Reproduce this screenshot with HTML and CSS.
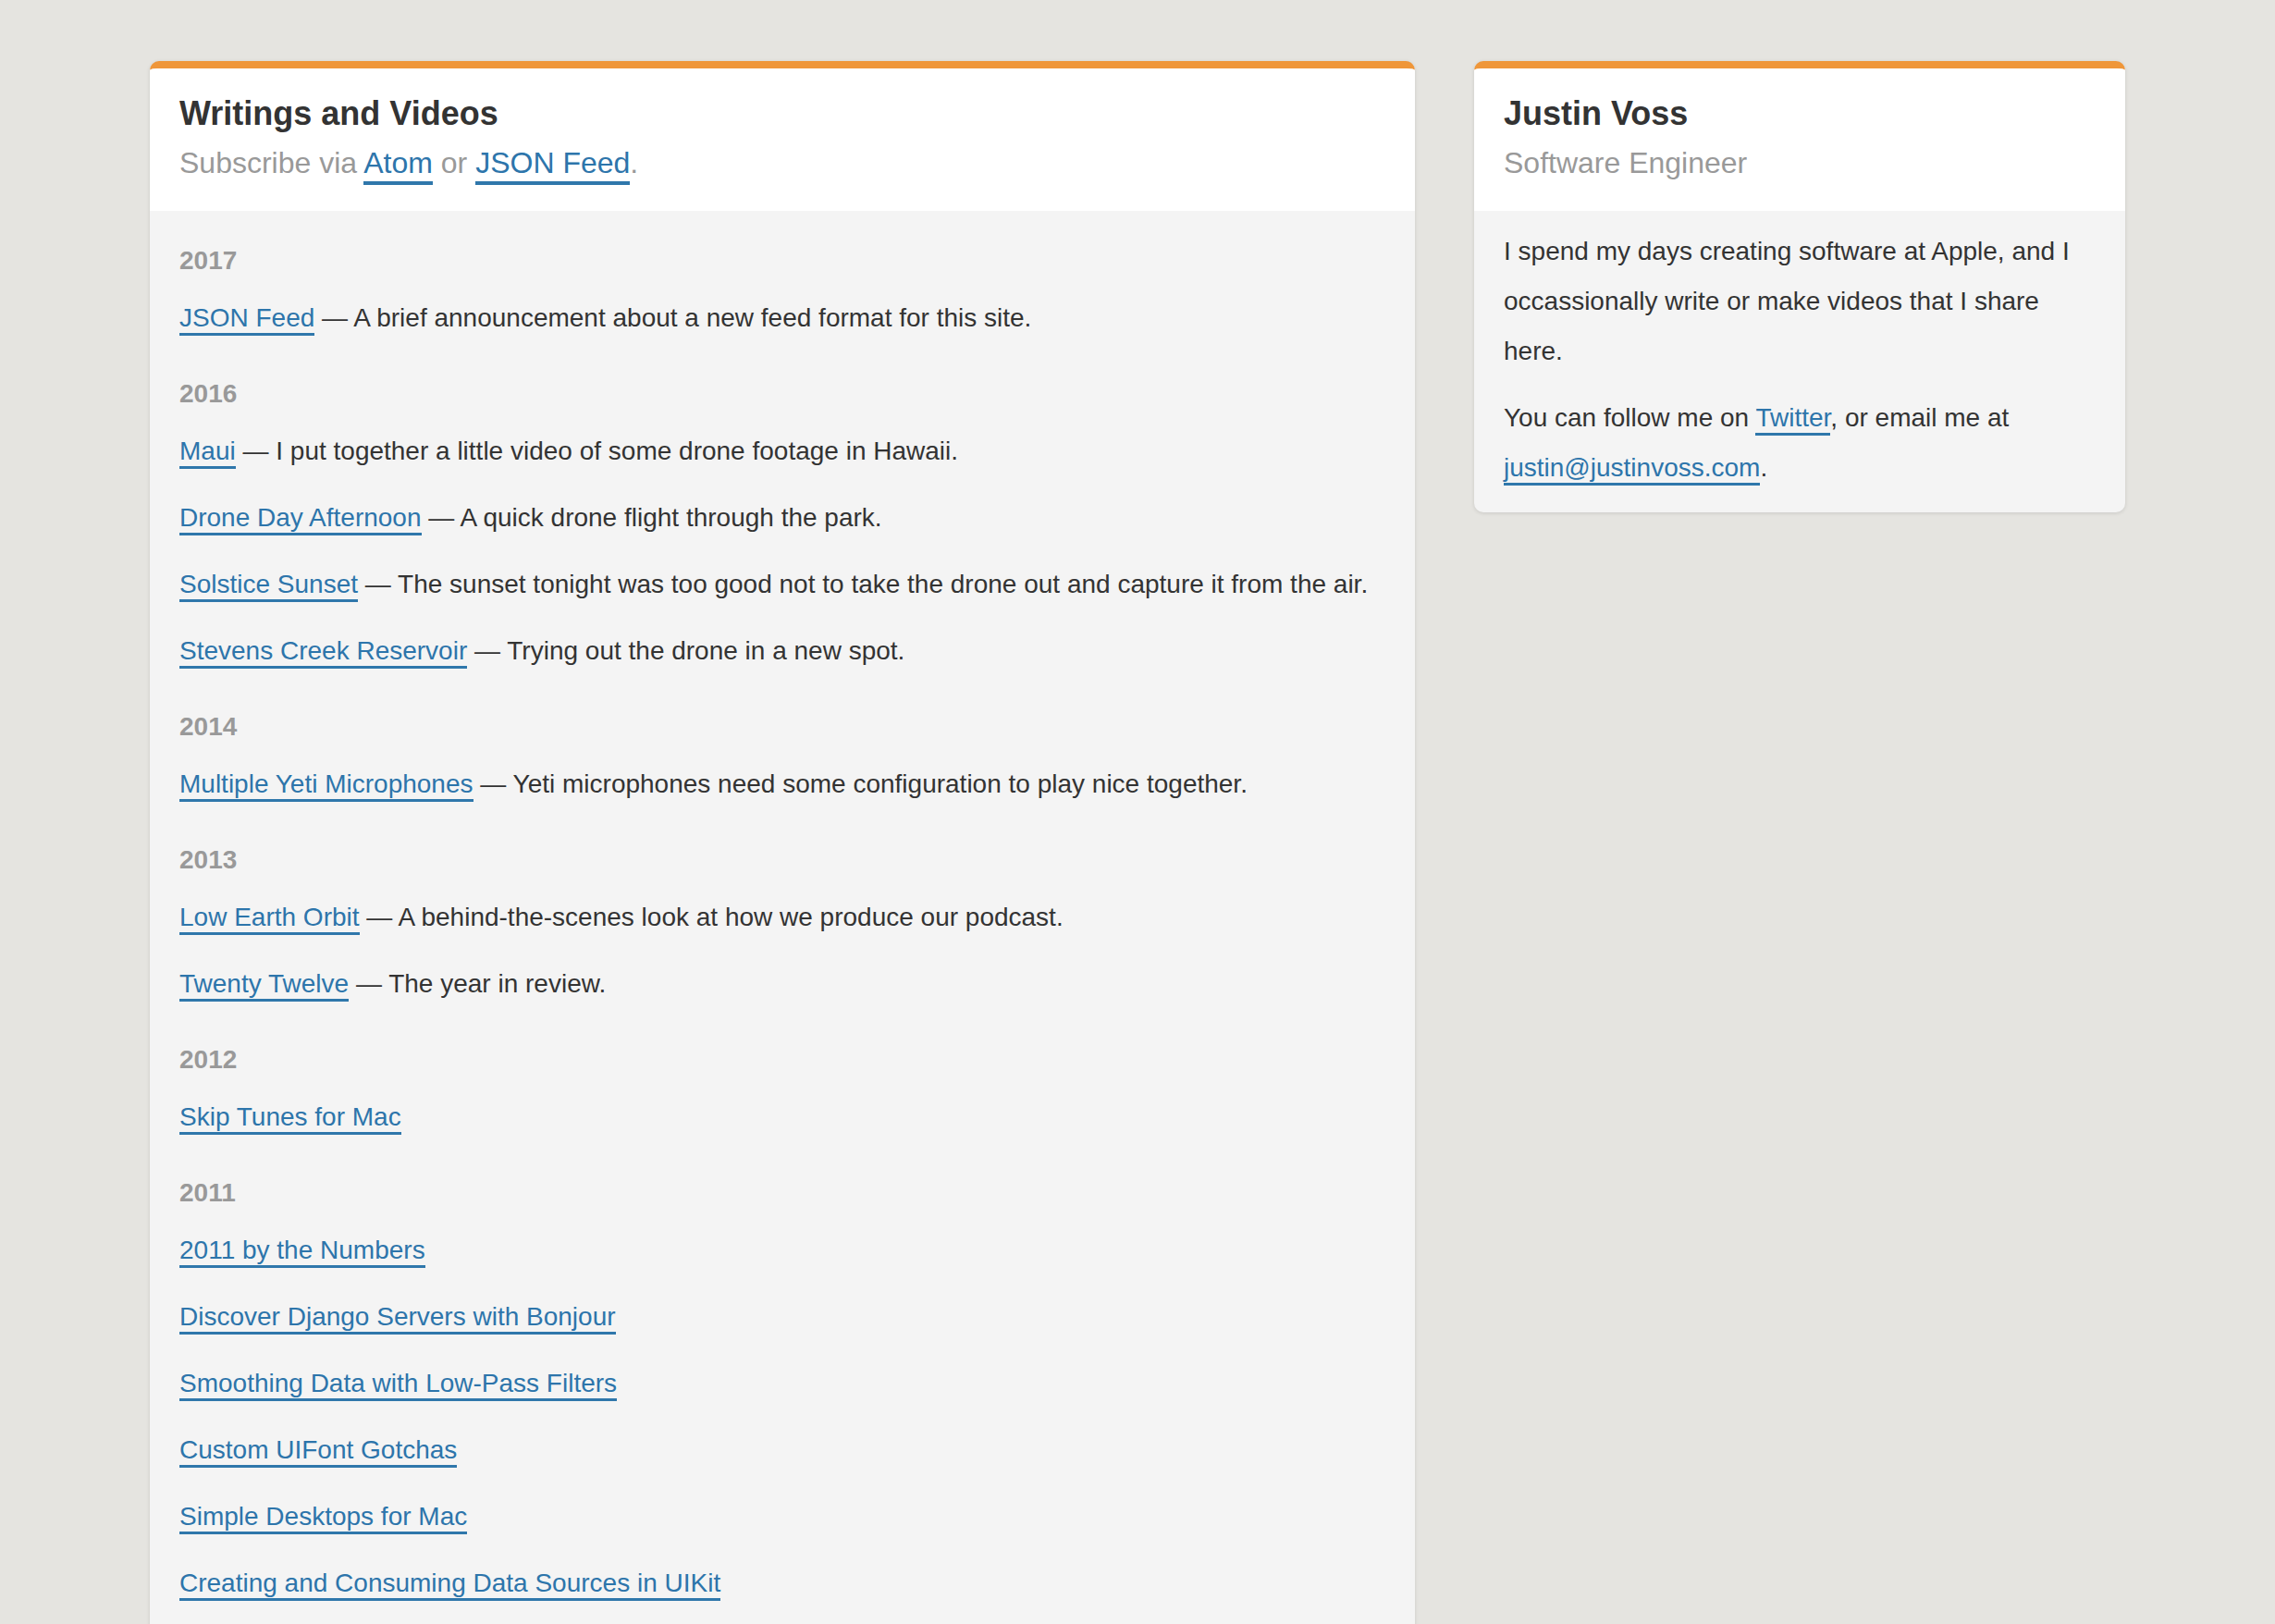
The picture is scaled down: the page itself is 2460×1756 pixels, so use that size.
FILE: index.html
```html
<!DOCTYPE html>
<html lang="en">
<head>
<meta charset="utf-8">
<title>Justin Voss</title>
<link rel="stylesheet" href="styles.css">
</head>
<body>
<div class="page">
  <main class="card card-main">
    <header class="card-header">
      <h1 class="card-title">Writings and Videos</h1>
      <p class="card-subtitle">Subscribe via <a href="#">Atom</a> or <a href="#">JSON Feed</a>.</p>
    </header>
    <section class="card-body">
      <h3 class="year">2017</h3>
      <p class="entry"><a href="#">JSON Feed</a> — A brief announcement about a new feed format for this site.</p>
      <h3 class="year">2016</h3>
      <p class="entry"><a href="#">Maui</a> — I put together a little video of some drone footage in Hawaii.</p>
      <p class="entry"><a href="#">Drone Day Afternoon</a> — A quick drone flight through the park.</p>
      <p class="entry"><a href="#">Solstice Sunset</a> — The sunset tonight was too good not to take the drone out and capture it from the air.</p>
      <p class="entry"><a href="#">Stevens Creek Reservoir</a> — Trying out the drone in a new spot.</p>
      <h3 class="year">2014</h3>
      <p class="entry"><a href="#">Multiple Yeti Microphones</a> — Yeti microphones need some configuration to play nice together.</p>
      <h3 class="year">2013</h3>
      <p class="entry"><a href="#">Low Earth Orbit</a> — A behind-the-scenes look at how we produce our podcast.</p>
      <p class="entry"><a href="#">Twenty Twelve</a> — The year in review.</p>
      <h3 class="year">2012</h3>
      <p class="entry"><a href="#">Skip Tunes for Mac</a></p>
      <h3 class="year">2011</h3>
      <p class="entry"><a href="#">2011 by the Numbers</a></p>
      <p class="entry"><a href="#">Discover Django Servers with Bonjour</a></p>
      <p class="entry"><a href="#">Smoothing Data with Low-Pass Filters</a></p>
      <p class="entry"><a href="#">Custom UIFont Gotchas</a></p>
      <p class="entry"><a href="#">Simple Desktops for Mac</a></p>
      <p class="entry"><a href="#">Creating and Consuming Data Sources in UIKit</a></p>
    </section>
  </main>
  <aside class="card card-side">
    <header class="card-header">
      <h1 class="card-title">Justin Voss</h1>
      <p class="card-subtitle">Software Engineer</p>
    </header>
    <section class="card-body side-body">
      <p class="para">I spend my days creating software at Apple, and I occassionally write or make videos that I share here.</p>
      <p class="para">You can follow me on <a href="#">Twitter</a>, or email me at <a href="#">justin@justinvoss.com</a>.</p>
    </section>
  </aside>
</div>
</body>
</html>
```
FILE: styles.css
```css
html, body {
  margin: 0;
  padding: 0;
}
body {
  background: #e5e4e0;
  font-family: "Liberation Sans", Arial, Helvetica, sans-serif;
  color: #333333;
  font-size: 28px;
}
.page {
  display: grid;
  grid-template-columns: 1368px 704px;
  column-gap: 64px;
  justify-content: center;
  align-items: start;
  padding-top: 66px;
}
.card {
  border-top: 8px solid #ef9639;
  border-radius: 10px;
  overflow: hidden;
  background: #f4f4f4;
  box-shadow: 0 1px 4px rgba(0, 0, 0, 0.12);
}
.card-header {
  background: #ffffff;
  padding: 27px 32px 0;
  height: 154px;
  box-sizing: border-box;
}
.card-title {
  margin: 0;
  font-size: 36px;
  line-height: 44px;
  font-weight: bold;
  color: #333333;
}
.card-subtitle {
  margin: 10px 0 0;
  font-size: 32px;
  line-height: 42px;
  color: #999999;
}
.card-subtitle a {
  padding-bottom: 2px;
  border-bottom-width: 4px;
}
a {
  color: #2d75ab;
  text-decoration: none;
  border-bottom: 3px solid #2f77ab;
  padding-bottom: 1px;
}
.card-body {
  padding: 34px 32px 40px;
}
.year {
  margin: 35px 0 15px;
  font-size: 28px;
  line-height: 40px;
  font-weight: bold;
  color: #999999;
}
.year:first-child {
  margin-top: 0;
}
.entry {
  margin: 0 0 18px;
  line-height: 54px;
}
.side-body {
  padding: 17px 32px 21px;
}
.para {
  margin: 0 0 18px;
  line-height: 54px;
}
.para:last-child {
  margin-bottom: 0;
}
```
